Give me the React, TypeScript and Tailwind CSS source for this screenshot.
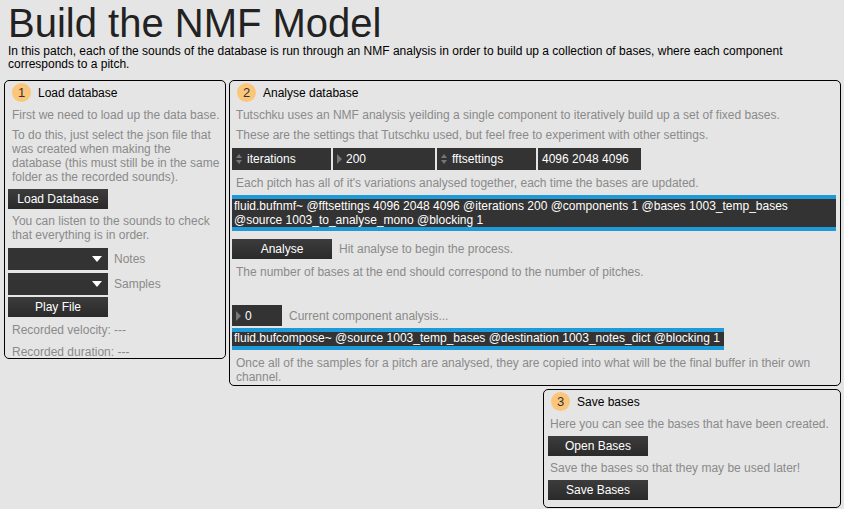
import React from "react";

const Badge = ({ n }: { n: string }) => (
  <div className="w-[19px] h-[19px] rounded-full bg-[#fbc67a] flex items-center justify-center text-[13px] text-[#333]">{n}</div>
);

const Btn = ({ label, w = "w-[100px]" }: { label: string; w?: string }) => (
  <div className={`${w} h-[20px] bg-gradient-to-b from-[#3c3c3c] to-[#2a2a2a] text-white text-[12px] flex items-center justify-center`}>{label}</div>
);

const Gray = ({ children, className = "" }: { children: React.ReactNode; className?: string }) => (
  <div className={`text-[12px] leading-[14px] text-[#8a8a8a] ${className}`}>{children}</div>
);

const Updown = () => (
  <svg width="8" height="12" viewBox="0 0 8 12" className="mr-[4px]"><path d="M4 1L7 5H1Z M4 11L1 7H7Z" fill="#777" /></svg>
);
const Tri = () => (
  <svg width="7" height="12" viewBox="0 0 7 12" className="mr-[3px]"><path d="M1 1L6 6L1 11Z" fill="#777" /></svg>
);

const Dropdown = () => (
  <div className="w-[100px] h-[22px] bg-[#333] flex items-center justify-end pr-[6px]">
    <svg width="10" height="6" viewBox="0 0 10 6"><path d="M0 0H10L5 6Z" fill="#fff" /></svg>
  </div>
);

export default function App() {
  return (
    <div className="w-[844px] h-[509px] bg-[#e5e5e5] overflow-hidden relative" style={{ fontFamily: '"Liberation Sans", Arial, sans-serif' }}>
      <div className="pl-[8px] pt-[1px] text-[40px] leading-[44px] text-[#222]">Build the NMF Model</div>
      <div className="pl-[8px] text-[12px] leading-[13px] text-black w-[820px]">
        In this patch, each of the sounds of the database is run through an NMF analysis in order to build up a collection of bases, where each component corresponds to a pitch.
      </div>
      <div className="flex gap-[3px] pl-[4px] mt-[9px]">
        <div className="w-[222px] h-[279px] border border-black rounded-[5px] px-[3px] pt-[2px]">
          <div className="flex items-center gap-[7px] ml-[4px]"><Badge n="1" /><span className="text-[12px] text-black">Load database</span></div>
          <Gray className="mt-[6px] ml-[4px] whitespace-nowrap">First we need to load up the data base.</Gray>
          <Gray className="mt-[6px] ml-[4px]">To do this, just select the json file that was created when making the database (this must still be in the same folder as the recorded sounds).</Gray>
          <div className="mt-[5px]"><Btn label="Load Database" /></div>
          <Gray className="mt-[5px] ml-[4px]">You can listen to the sounds to check that everything is in order.</Gray>
          <div className="mt-[6px] flex items-center gap-[6px]"><Dropdown /><span className="text-[12px] text-[#8a8a8a]">Notes</span></div>
          <div className="mt-[3px] flex items-center gap-[6px]"><Dropdown /><span className="text-[12px] text-[#8a8a8a]">Samples</span></div>
          <div className="mt-[2px]"><Btn label="Play File" /></div>
          <Gray className="mt-[6px] ml-[4px]">Recorded velocity: ---</Gray>
          <Gray className="mt-[8px] ml-[4px]">Recorded duration: ---</Gray>
        </div>
        <div className="flex flex-col">
          <div className="w-[612px] h-[306px] border border-black rounded-[5px] px-[2px] pt-[2px]">
            <div className="flex items-center gap-[7px] ml-[5px]"><Badge n="2" /><span className="text-[12px] text-black">Analyse database</span></div>
            <Gray className="mt-[6px] ml-[4px]">Tutschku uses an NMF analysis yeilding a single component to iteratively build up a set of fixed bases.</Gray>
            <Gray className="mt-[6px] ml-[4px]">These are the settings that Tutschku used, but feel free to experiment with other settings.</Gray>
            <div className="mt-[6px] flex gap-[2px] text-white text-[12px]">
              <div className="w-[99px] h-[22px] bg-[#333] flex items-center pl-[3px]"><Updown />iterations</div>
              <div className="w-[102px] h-[22px] bg-[#333] flex items-center pl-[3px]"><Tri />200</div>
              <div className="w-[99px] h-[22px] bg-[#333] flex items-center pl-[3px]"><Updown />fftsettings</div>
              <div className="w-[103px] h-[22px] bg-[#333] flex items-center pl-[4px]">4096 2048 4096</div>
            </div>
            <Gray className="mt-[6px] ml-[4px]">Each pitch has all of it's variations analysed together, each time the bases are updated.</Gray>
            <div className="mt-[5px] w-[604px] h-[36px] bg-[#333] border-y-[4px] border-[#1e9ad8] text-white text-[12px] leading-[13.5px] px-[2px] pt-[1px] whitespace-nowrap">
              fluid.bufnmf~ @fftsettings 4096 2048 4096 @iterations 200 @components 1 @bases 1003_temp_bases<br />@source 1003_to_analyse_mono @blocking 1
            </div>
            <div className="mt-[8px] flex items-center gap-[7px]"><Btn label="Analyse" /><span className="text-[12px] text-[#8a8a8a]">Hit analyse to begin the process.</span></div>
            <Gray className="mt-[6px] ml-[4px]">The number of bases at the end should correspond to the number of pitches.</Gray>
            <div className="mt-[26px] flex items-center gap-[7px]">
              <div className="w-[50px] h-[21px] bg-[#333] text-white text-[12px] flex items-center pl-[3px]"><Tri />0</div>
              <span className="text-[12px] text-[#8a8a8a]">Current component analysis...</span>
            </div>
            <div className="mt-[2px] w-[492px] h-[22px] bg-[#333] border-y-[4px] border-[#1e9ad8] text-white text-[12px] leading-[13px] px-[2px] whitespace-nowrap overflow-hidden">
              fluid.bufcompose~ @source 1003_temp_bases @destination 1003_notes_dict @blocking 1
            </div>
            <Gray className="mt-[6px] ml-[4px] leading-[13px]">Once all of the samples for a pitch are analysed, they are copied into what will be the final buffer in their own channel.</Gray>
          </div>
          <div className="self-end w-[298px] h-[119px] mt-[3px] border border-black rounded-[5px] px-[4px] pt-[2px]">
            <div className="flex items-center gap-[7px] ml-[3px]"><Badge n="3" /><span className="text-[12px] text-black">Save bases</span></div>
            <Gray className="mt-[6px] ml-[2px] whitespace-nowrap">Here you can see the bases that have been created.</Gray>
            <div className="mt-[5px]"><Btn label="Open Bases" /></div>
            <Gray className="mt-[5px] ml-[2px] whitespace-nowrap">Save the bases so that they may be used later!</Gray>
            <div className="mt-[5px]"><Btn label="Save Bases" /></div>
          </div>
        </div>
      </div>
    </div>
  );
}
